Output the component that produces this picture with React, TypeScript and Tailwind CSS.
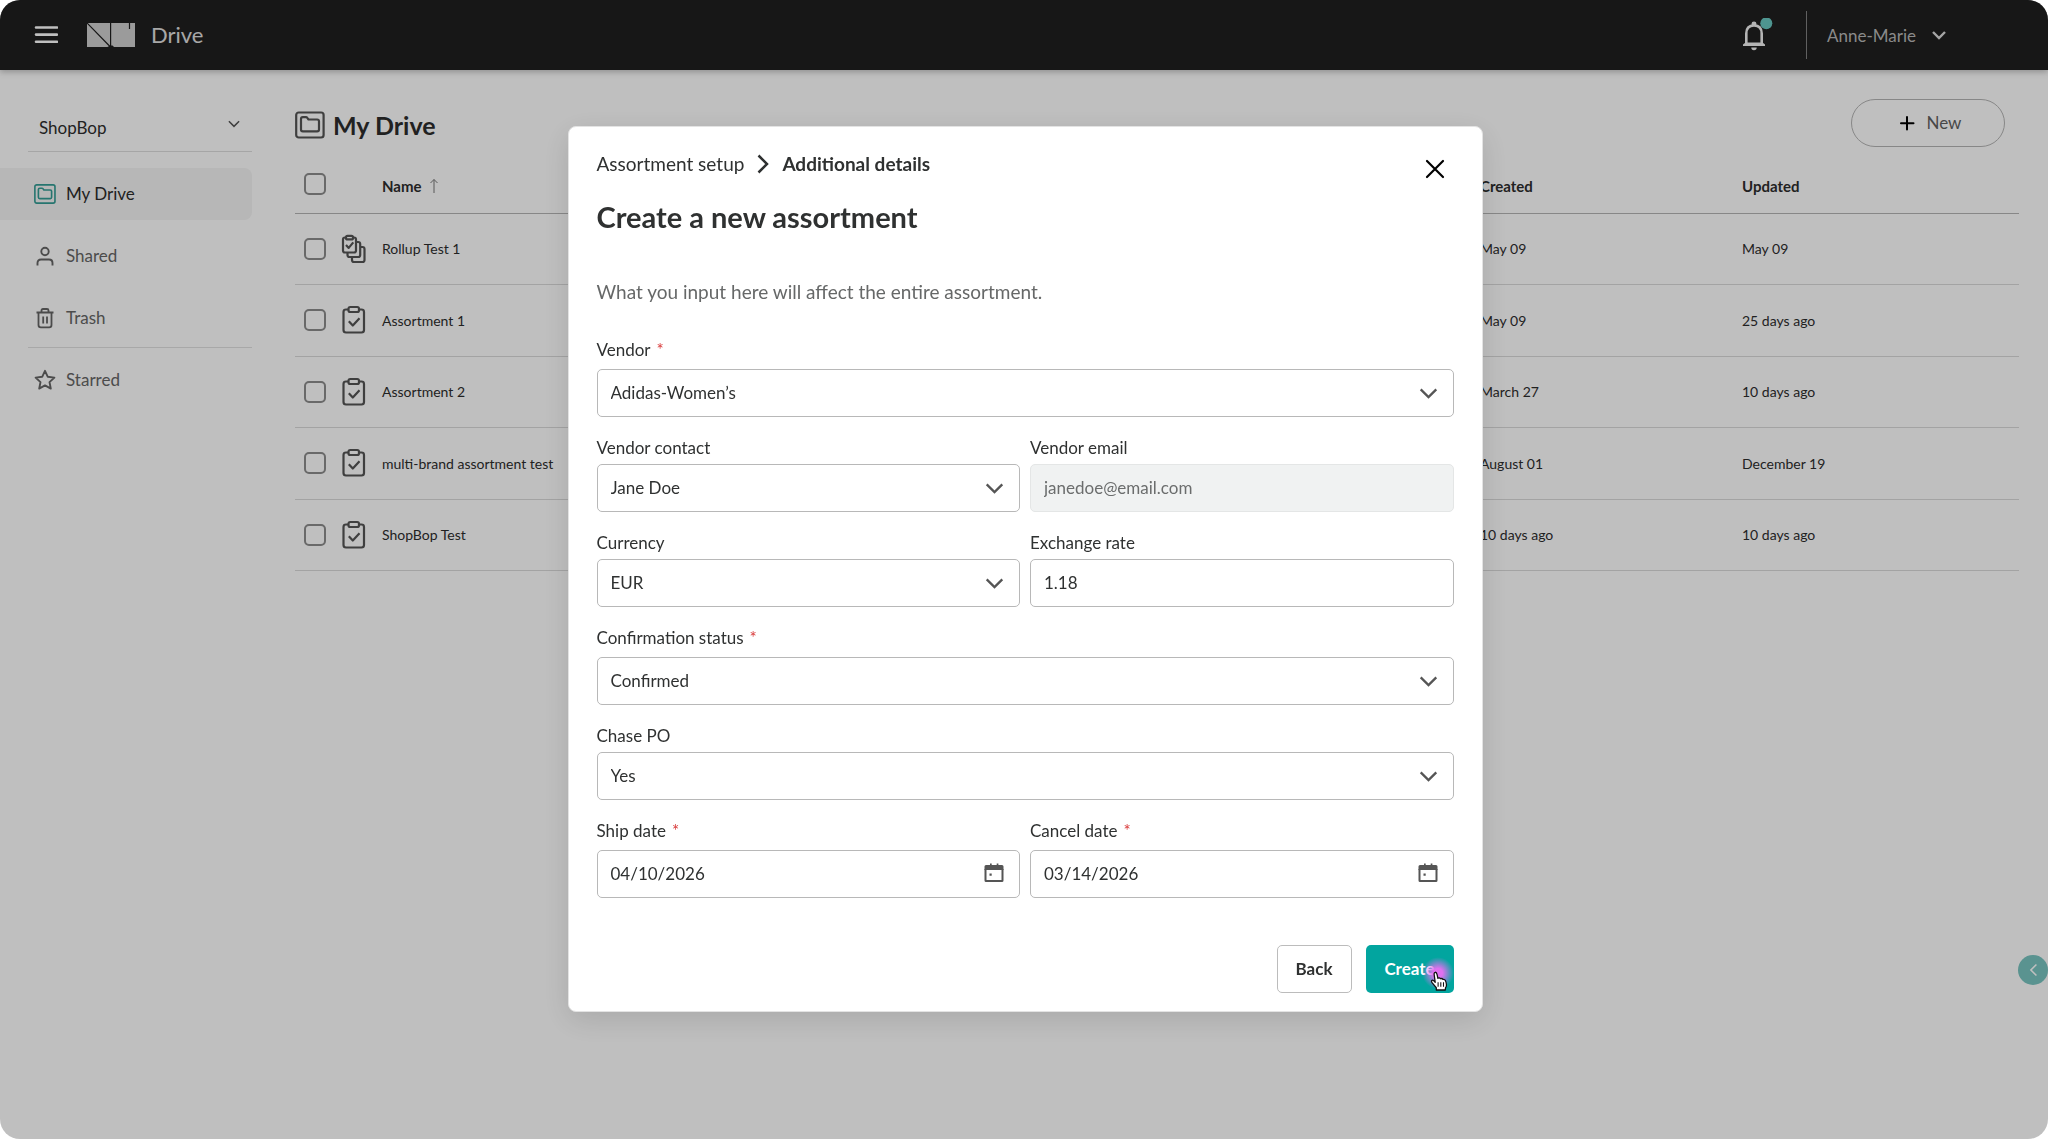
import { useState } from "react";
import type { ReactNode } from "react";

const files = [
  { name: "Rollup Test 1", created: "May 09", updated: "May 09", rollup: true },
  { name: "Assortment 1", created: "May 09", updated: "25 days ago" },
  { name: "Assortment 2", created: "March 27", updated: "10 days ago" },
  {
    name: "multi-brand assortment test",
    created: "August 01",
    updated: "December 19",
  },
  { name: "ShopBop Test", created: "10 days ago", updated: "10 days ago" },
];

const Chevron = ({ className }: { className: string }) => (
  <svg
    viewBox="0 0 20 12"
    fill="none"
    stroke="currentColor"
    strokeWidth="2.5"
    className={className}>
    <path d="M1.5 1.5 10 10l8.5-8.5" />
  </svg>
);

const DriveIcon = ({ className }: { className: string }) => (
  <svg
    viewBox="0 0 30 28"
    fill="none"
    stroke="currentColor"
    strokeWidth="2.2"
    strokeLinejoin="round"
    className={className}>
    <rect x="1.2" y="1.5" width="27.4" height="25" rx="2.5" />
    <path d="M6 18.5V8q0-1.800 1.800-1.800h3.200q.8 0 1.300.7l1.200 1.600h8.700q1.800 0 1.800 1.800v8.200q0 1.800-1.800 1.800H7.800Q6 20.300 6 18.500Z" />
  </svg>
);

const ClipboardIcon = () => (
  <svg
    viewBox="0 0 26 30"
    fill="none"
    stroke="currentColor"
    strokeWidth="2.2"
    strokeLinejoin="round"
    className="h-[30px] w-[26px]">
    <path d="M7 4.500H5Q2.500 4.500 2.500 7v18Q2.500 27.500 5 27.500h15.500q2.500 0 2.500-2.500V7q0-2.500-2.500-2.500h-2" />
    <rect x="7.500" y="2" width="10.500" height="5" rx="1.800" />
    <path d="m7.800 16.300 4 4.200 6.700-7.300" />
  </svg>
);

const RollupIcon = () => (
  <svg
    viewBox="0 0 26 30"
    fill="none"
    stroke="currentColor"
    strokeWidth="2.2"
    strokeLinejoin="round"
    className="h-[30px] w-[26px]">
    <path d="M5 3.500H4Q2 3.500 2 5.500v11q0 2 2 2h9q2 0 2-2v-11q0-2-2-2h-1" />
    <rect x="5" y="1.800" width="7" height="3.600" rx="1.500" />
    <path d="m5 11 2.700 2.900 4.600-5.500" />
    <path d="M15.500 8h1.700q2 0 2 2v11q0 2-2 2H8.500q-2 0-2-2v-2" />
    <path d="M19.500 13h2q2 0 2 2v11q0 2-2 2H13q-2 0-2-2v-2.500" />
  </svg>
);

const TopBar = () => (
  <header className="flex h-[70px] items-center bg-[#1f1f1f] pl-[34px] pr-[102px] shadow-[0_2px_6px_rgba(0,0,0,0.25)]">
    <button aria-label="Menu" className="text-white">
      <svg
        viewBox="0 0 24 20"
        stroke="currentColor"
        strokeWidth="2.6"
        strokeLinecap="round"
        className="h-5 w-6">
        <path d="M2 2.500h21M2 9.600h21M2 16.800h21" />
      </svg>
    </button>
    <svg viewBox="0 0 48 24" className="ml-[29px] h-6 w-12">
      <path d="M0 0h48v24H0z" fill="#cfcfcf" />
      <path
        d="M0 0 23 23.500M23.600 0v24M42.500 0v6"
        stroke="#1f1f1f"
        strokeWidth="1.200"
      />
      <path d="m20.500 24 2.500-1.600h2.500L27 24z" fill="#1f1f1f" />
    </svg>
    <span className="ml-4 text-[22px] leading-7 text-[#e0e0e0]">Drive</span>

    <div className="ml-auto flex items-center">
      <button aria-label="Notifications" className="text-[#f0f0f0]">
        <svg viewBox="0 0 32 34" fill="none" className="h-[34px] w-8">
          <path
            d="M4.300 26V15.500Q4.300 7.500 12 7.500t7.700 8V26"
            stroke="currentColor"
            strokeWidth="2.600"
          />
          <path
            d="M1 28v-1.600l2.500-1.900h17l2.500 1.900V28zM9.600 7.500V5.400q0-2 2.400-2t2.400 2v2.100zM9.300 29.600h5.400a2.700 2.700 0 0 1-5.400 0Z"
            fill="currentColor"
          />
          <circle cx="24.300" cy="5.300" r="6" fill="#69c7c0" />
        </svg>
      </button>
      <span className="ml-8 h-12 w-px bg-[#808080]" />
      <button className="ml-5 flex items-center gap-4 pt-px text-[17px] leading-6 text-[#b8b8b8]">
        Anne-Marie
        <svg
          viewBox="0 0 14 9"
          fill="none"
          stroke="#dcdcdc"
          strokeWidth="2.4"
          className="h-[9px] w-[14px]">
          <path d="m1 1 6 6 6-6" />
        </svg>
      </button>
    </div>
  </header>
);

const NavItem = ({
  icon,
  label,
  active,
}: {
  icon: ReactNode;
  label: string;
  active?: boolean;
}) => (
  <a
    href="#"
    className={`flex h-[52px] items-center gap-[10px] rounded-r-lg pl-[34px] text-[17px] ${
      active ? "bg-[#f4f4f4] text-[#2d2d2d]" : "text-[#666666]"
    }`}>
    {icon}
    {label}
  </a>
);

const SideBar = () => (
  <nav className="w-[252px] shrink-0 pt-[34px]">
    <div className="relative ml-7 border-b border-[#dedede]">
      <select
        aria-label="Workspace"
        className="h-[47px] w-full appearance-none pl-[11px] text-[17px] text-[#2d2d2d]">
        <option>ShopBop</option>
      </select>
      <Chevron className="pointer-events-none absolute right-3 top-4 h-[8px] w-3 text-[#555555]" />
    </div>
    <div className="mt-4 grid gap-[10px]">
      <NavItem
        active
        label="My Drive"
        icon={<DriveIcon className="h-[22px] w-[22px] text-[#339c94]" />}
      />
      <NavItem
        label="Shared"
        icon={
          <svg
            viewBox="0 0 22 22"
            fill="none"
            stroke="currentColor"
            strokeWidth="1.900"
            className="h-[22px] w-[22px]">
            <circle cx="11" cy="6.500" r="3.700" />
            <path d="M3.500 20.500v-2.500q0-3.500 3.500-3.500h8q3.500 0 3.500 3.500v2.500" />
          </svg>
        }
      />
      <NavItem
        label="Trash"
        icon={
          <svg
            viewBox="0 0 22 22"
            fill="none"
            stroke="currentColor"
            strokeWidth="1.800"
            strokeLinejoin="round"
            className="h-[22px] w-[22px]">
            <path d="M2.500 5.500h17M4.500 5.500V18q0 2.300 2.300 2.300h8.400q2.300 0 2.300-2.300V5.500M7.500 5V3.500Q7.500 2 9 2h4q1.500 0 1.500 1.500V5M9.200 9.500v7M13 9.500v7" />
          </svg>
        }
      />
    </div>
    <div className="ml-7 mt-[3px] border-b border-[#e0e0e0]" />
    <div className="mt-[6px]">
      <NavItem
        label="Starred"
        icon={
          <svg
            viewBox="0 0 22 22"
            fill="none"
            stroke="currentColor"
            strokeWidth="1.900"
            strokeLinejoin="round"
            className="h-[22px] w-[22px]">
            <path d="m11 1.800 2.800 6 6.600.8-4.900 4.500 1.300 6.500L11 16.400l-5.800 3.200 1.300-6.500L1.600 8.600l6.600-.8z" />
          </svg>
        }
      />
    </div>
  </nav>
);

const CheckBox = ({ label }: { label: string }) => (
  <input
    type="checkbox"
    aria-label={label}
    className="block size-[22px] appearance-none rounded-[5px] border-2 border-[#8c8c8c]"
  />
);

const FileTable = () => (
  <table className="h-[412px] w-full table-fixed text-left text-[14px] text-[#2d2d2d]">
    <colgroup>
      <col className="w-[46px]" />
      <col className="w-[41px]" />
      <col />
      <col className="w-[262px]" />
      <col className="w-[277px]" />
    </colgroup>
    <thead>
      <tr className="h-[54px] border-b border-[#b5b5b5] text-[15px]">
        <th className="pb-1 pl-[9px]">
          <CheckBox label="Select all" />
        </th>
        <th />
        <th>
          <span className="flex items-center gap-2">
            Name
            <svg
              viewBox="0 0 8 16"
              fill="none"
              stroke="#777777"
              className="h-4 w-2">
              <path d="M4 15V1.500M.5 5 4 1.500 7.500 5" />
            </svg>
          </span>
        </th>
        <th>Created</th>
        <th>Updated</th>
      </tr>
    </thead>
    <tbody>
      {files.map((file) => (
        <tr key={file.name} className="border-b border-[#dadada]">
          <td className="pl-[9px]">
            <CheckBox label={`Select ${file.name}`} />
          </td>
          <td className="text-[#555555]">
            {file.rollup ? <RollupIcon /> : <ClipboardIcon />}
          </td>
          <td>{file.name}</td>
          <td>{file.created}</td>
          <td>{file.updated}</td>
        </tr>
      ))}
    </tbody>
  </table>
);

const Field = ({
  id,
  label,
  required,
  wide,
  children,
}: {
  id: string;
  label: string;
  required?: boolean;
  wide?: boolean;
  children: ReactNode;
}) => (
  <div className={wide ? "col-span-2" : ""}>
    <label
      htmlFor={id}
      className={`block text-[17px] leading-5 ${
        required ? "mb-[9px]" : "mb-[6px]"
      }`}>
      {label}
      {required && <span className="ml-[6px] text-[#d93a3a]">*</span>}
    </label>
    <div className="relative">{children}</div>
  </div>
);

const box =
  "block h-12 w-full appearance-none rounded-[5px] border border-[#b8b8b8] px-[13px] text-[17px]";

const SelectBox = ({ id, value }: { id: string; value: string }) => (
  <>
    <select id={id} className={`${box} bg-white`}>
      <option>{value}</option>
    </select>
    <Chevron className="pointer-events-none absolute right-4 top-[19px] h-[11px] w-[19px] text-[#555555]" />
  </>
);

const DateBox = ({ id, value }: { id: string; value: string }) => (
  <>
    <input id={id} defaultValue={value} className={`${box} bg-white`} />
    <button
      type="button"
      aria-label="Open calendar"
      className="absolute right-4 top-[13px] text-[#555555]">
      <svg viewBox="0 0 20 20" fill="none" className="size-5">
        <path
          d="M1.500 6v11.500q0 .5.500.500h16q.5 0 .5-.500V6"
          stroke="currentColor"
          strokeWidth="2"
        />
        <path
          d="M2 2h4V.500h1.700V2h5V.500h1.700V2H18q1.500 0 1.500 1.500v3.500H.5V3.500Q.5 2 2 2ZM5.500 10.500h2.200v2.200H5.500z"
          fill="currentColor"
        />
      </svg>
    </button>
  </>
);

const HandCursor = () => (
  <span className="pointer-events-none absolute right-0 top-3 size-8 rounded-full bg-radial from-[#e070f0] from-20% to-[#e070f0]/0 to-70%">
    <svg
      viewBox="0 0 20 22"
      className="absolute left-2 top-[14px] h-5 w-[18px]"
      fill="#ffffff"
      stroke="#111111"
      strokeWidth="1.400"
      strokeLinejoin="round">
      <path d="M7 21v-2.500L2.500 13Q1 10.800 2.300 10.200q1.200-.5 3.500 2.300L4.700 4.500Q4.200 1.500 5.700 1.300 7.200 1 7.900 4l.9 4q2-1 2.900.5 1.800-.8 2.700.8 1.900-.5 2.700 1.200.9 2 1.200 4.500.2 2-1.100 3.700L17 21Z" />
      <path d="M9 12.500v5M12 12.500v5M15 12.500v5" strokeWidth="1.200" />
    </svg>
  </span>
);

const AssortmentDialog = ({ onClose }: { onClose: () => void }) => (
  <div className="fixed inset-0 flex items-center justify-center overflow-auto rounded-[20px] bg-black/25 pb-0.5 pl-0.5">
    <div
      role="dialog"
      aria-labelledby="dialog-title"
      className="w-[915px] max-w-full rounded-lg border border-[#e3e3e3] bg-white px-7 pb-[18px] pt-[25px] text-[#2f3131] shadow-[0_8px_30px_rgba(0,0,0,0.12)]">
      <div className="flex items-start justify-between">
        <div className="flex items-center gap-[9px] text-[19px] leading-6">
          <a href="#">Assortment setup</a>
          <Chevron className="h-3 w-5 -rotate-90" />
          <b>Additional details</b>
        </div>
        <button
          aria-label="Close"
          onClick={onClose}
          className="mr-[9px] mt-[7px] text-black">
          <svg
            viewBox="0 0 20 20"
            stroke="currentColor"
            strokeWidth="2.200"
            strokeLinecap="round"
            className="size-5">
            <path d="m2 2 16 16M18 2 2 18" />
          </svg>
        </button>
      </div>
      <h2
        id="dialog-title"
        className="mt-5 text-[29px] font-bold leading-9">
        Create a new assortment
      </h2>
      <p className="mt-[45px] text-[19px] leading-6 text-[#666868]">
        What you input here will affect the entire assortment.
      </p>
      <form
        onSubmit={(e) => e.preventDefault()}
        className="mt-9">
        <div className="grid grid-cols-2 gap-x-[10px] gap-y-[21px]">
          <Field id="vendor" label="Vendor" required wide>
            <SelectBox id="vendor" value="Adidas-Women’s" />
          </Field>
          <Field id="contact" label="Vendor contact">
            <SelectBox id="contact" value="Jane Doe" />
          </Field>
          <Field id="email" label="Vendor email">
            <input
              id="email"
              disabled
              defaultValue="janedoe@email.com"
              className="block h-12 w-full rounded-[5px] border border-[#e4e6e6] bg-[#f0f2f2] px-[13px] text-[17px] text-[#6b6d6d]"
            />
          </Field>
          <Field id="currency" label="Currency">
            <SelectBox id="currency" value="EUR" />
          </Field>
          <Field id="rate" label="Exchange rate">
            <input
              id="rate"
              defaultValue="1.18"
              className={`${box} bg-white`}
            />
          </Field>
          <Field id="status" label="Confirmation status" required wide>
            <SelectBox id="status" value="Confirmed" />
          </Field>
          <Field id="chase" label="Chase PO" wide>
            <SelectBox id="chase" value="Yes" />
          </Field>
          <Field id="ship" label="Ship date" required>
            <DateBox id="ship" value="04/10/2026" />
          </Field>
          <Field id="cancel" label="Cancel date" required>
            <DateBox id="cancel" value="03/14/2026" />
          </Field>
        </div>
        <div className="mt-[47px] flex justify-end gap-[14px] text-[17px] font-bold">
          <button
            type="button"
            className="h-12 w-[75px] rounded-[5px] border border-[#bcbcbc]">
            Back
          </button>
          <button
            type="submit"
            className="relative h-12 w-[88px] rounded-[5px] bg-[#02a59f] text-white">
            Create
            <HandCursor />
          </button>
        </div>
      </form>
    </div>
  </div>
);

const App = () => {
  const [open, setOpen] = useState(true);

  return (
    <div className="min-h-screen overflow-hidden rounded-[20px] bg-white font-[Lato,sans-serif]">
      <TopBar />
      <div className="flex gap-[43px]">
        <SideBar />
        <main className="min-w-0 grow pr-[29px] pt-[29px]">
          <div className="flex items-center justify-between pr-[14px]">
            <h1 className="flex items-center gap-2 pt-1 text-[25px] font-bold leading-8 text-[#2d2d2d]">
              <DriveIcon className="h-7 w-[30px] text-[#555555]" />
              My Drive
            </h1>
            <button className="flex h-12 w-[154px] items-center justify-center gap-3 rounded-full border border-[#b5b5b5] pl-1 text-[17px] text-[#5f5f5f]">
              <svg
                viewBox="0 0 16 16"
                stroke="#000000"
                strokeWidth="2"
                strokeLinecap="round"
                className="size-4">
                <path d="M8 2v12.500M2 8.300h12.500" />
              </svg>
              New
            </button>
          </div>
          <div className="mt-3">
            <FileTable />
          </div>
        </main>
      </div>
      <button
        aria-label="Open panel"
        className="fixed bottom-[154px] right-0 flex size-[30px] items-center justify-center rounded-full bg-[#78c4c0] text-white">
        <Chevron className="h-2 w-[13px] rotate-90" />
      </button>
      {open && <AssortmentDialog onClose={() => setOpen(false)} />}
    </div>
  );
};

export default App;
